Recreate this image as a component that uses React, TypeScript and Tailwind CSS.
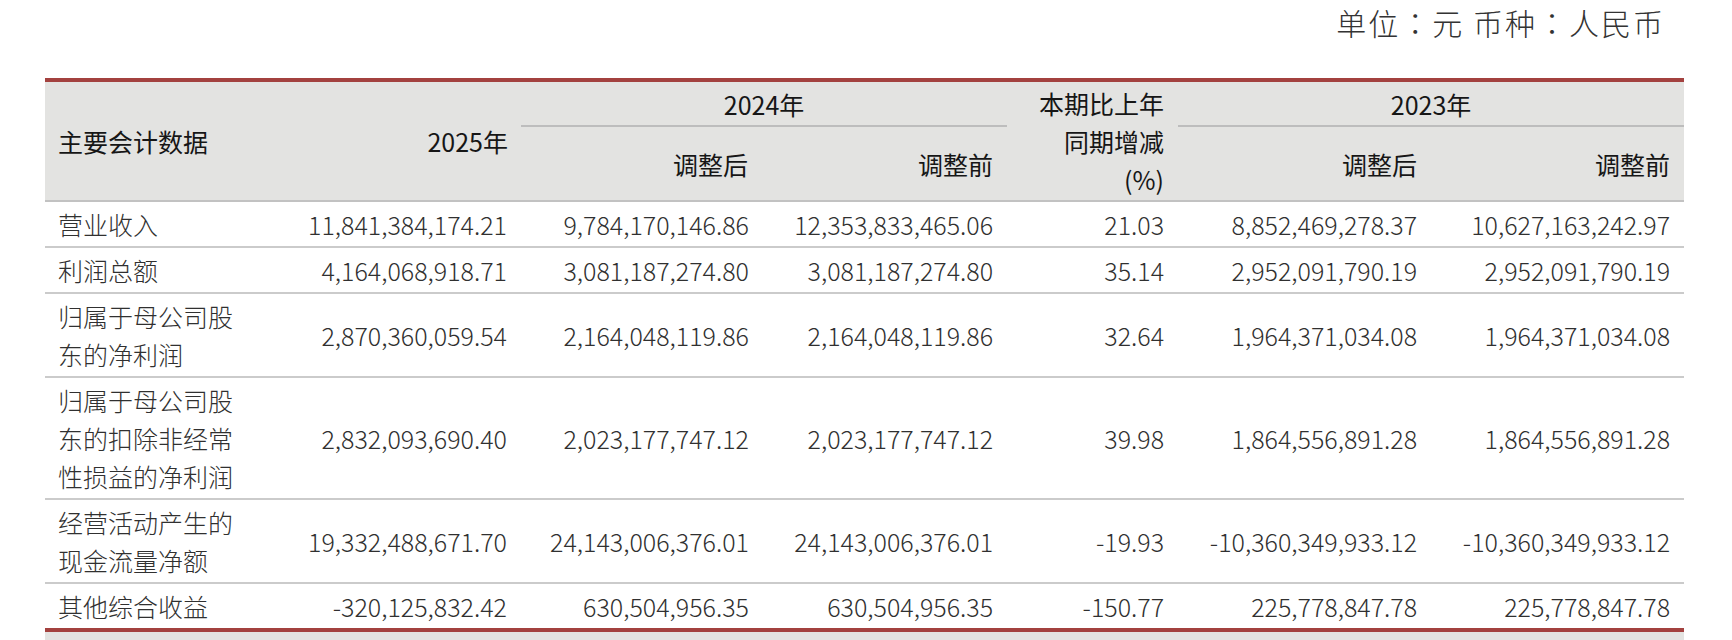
const rows = [
  {
    label: ["营业收入"],
    values: ["11,841,384,174.21", "9,784,170,146.86", "12,353,833,465.06", "21.03", "8,852,469,278.37", "10,627,163,242.97"],
  },
  {
    label: ["利润总额"],
    values: ["4,164,068,918.71", "3,081,187,274.80", "3,081,187,274.80", "35.14", "2,952,091,790.19", "2,952,091,790.19"],
  },
  {
    label: ["归属于母公司股", "东的净利润"],
    values: ["2,870,360,059.54", "2,164,048,119.86", "2,164,048,119.86", "32.64", "1,964,371,034.08", "1,964,371,034.08"],
  },
  {
    label: ["归属于母公司股", "东的扣除非经常", "性损益的净利润"],
    values: ["2,832,093,690.40", "2,023,177,747.12", "2,023,177,747.12", "39.98", "1,864,556,891.28", "1,864,556,891.28"],
  },
  {
    label: ["经营活动产生的", "现金流量净额"],
    values: ["19,332,488,671.70", "24,143,006,376.01", "24,143,006,376.01", "-19.93", "-10,360,349,933.12", "-10,360,349,933.12"],
  },
  {
    label: ["其他综合收益"],
    values: ["-320,125,832.42", "630,504,956.35", "630,504,956.35", "-150.77", "225,778,847.78", "225,778,847.78"],
  },
];

const font = { fontFamily: '"Noto Sans CJK SC", "Noto Sans", sans-serif' };
const titleFont = { fontFamily: '"Noto Sans CJK TC", "Noto Sans CJK SC", sans-serif' };

export default function App() {
  return (
    <div className="w-[1732px] h-[640px] overflow-hidden bg-white pl-[45px] pr-[48px]" style={font}>
      <div
        className="pt-[7px] mb-[41px] pr-[19px] text-right text-[30px] leading-[30px] tracking-[2px] font-light text-[#333]"
        style={titleFont}
      >
        单位：元 币种：人民币
      </div>

      <table className="w-full table-fixed border-separate border-spacing-0 border-t-4 border-b-4 border-[#a3413f] text-[25px] leading-[38px]">
        <colgroup>
          <col className="w-[218px]" />
          <col className="w-[258px]" />
          <col className="w-[242px]" />
          <col className="w-[244px]" />
          <col className="w-[171px]" />
          <col className="w-[253px]" />
          <col className="w-[253px]" />
        </colgroup>
        <thead className="bg-[#e3e3e1] text-[#161616]">
          <tr>
            <th rowSpan={2} className="pl-[13px] py-[2px] text-left font-normal align-middle border-b-2 border-[#c2c2c2]">
              主要会计数据
            </th>
            <th rowSpan={2} className="pr-[13px] py-[2px] text-right font-normal align-middle border-b-2 border-[#c2c2c2]">
              2025年
            </th>
            <th colSpan={2} className="pt-[3px] pb-[2px] text-center font-normal border-b-2 border-[#bdbdbd]">
              2024年
            </th>
            <th rowSpan={2} className="pr-[14px] py-[2px] text-right font-normal align-middle border-b-2 border-[#c2c2c2]">
              本期比上年
              <br />
              同期增减
              <br />
              (%)
            </th>
            <th colSpan={2} className="pt-[3px] pb-[2px] text-center font-normal border-b-2 border-[#bdbdbd]">
              2023年
            </th>
          </tr>
          <tr>
            <th className="pr-[15px] py-[17px] text-right font-normal border-b-2 border-[#c2c2c2]">调整后</th>
            <th className="pr-[14px] py-[17px] text-right font-normal border-b-2 border-[#c2c2c2]">调整前</th>
            <th className="pr-[14px] py-[17px] text-right font-normal border-b-2 border-[#c2c2c2]">调整后</th>
            <th className="pr-[14px] py-[17px] text-right font-normal border-b-2 border-[#c2c2c2]">调整前</th>
          </tr>
        </thead>
        <tbody className="text-[#303030] font-light">
          {rows.map((row, i) => {
            const last = i === rows.length - 1;
            const line = last ? "" : "border-b-2 border-[#cbcbcb]";
            return (
              <tr key={i}>
                <td className={`pl-[13px] py-[3px] align-middle ${line}`}>
                  {row.label.map((t, j) => (
                    <div key={j}>{t}</div>
                  ))}
                </td>
                {row.values.map((v, j) => (
                  <td key={j} className={`pr-[14px] py-[3px] text-right align-middle whitespace-nowrap ${line}`}>
                    {v}
                  </td>
                ))}
              </tr>
            );
          })}
        </tbody>
      </table>
      <div className="h-[20px] bg-[#e3e3e1]" />
    </div>
  );
}
